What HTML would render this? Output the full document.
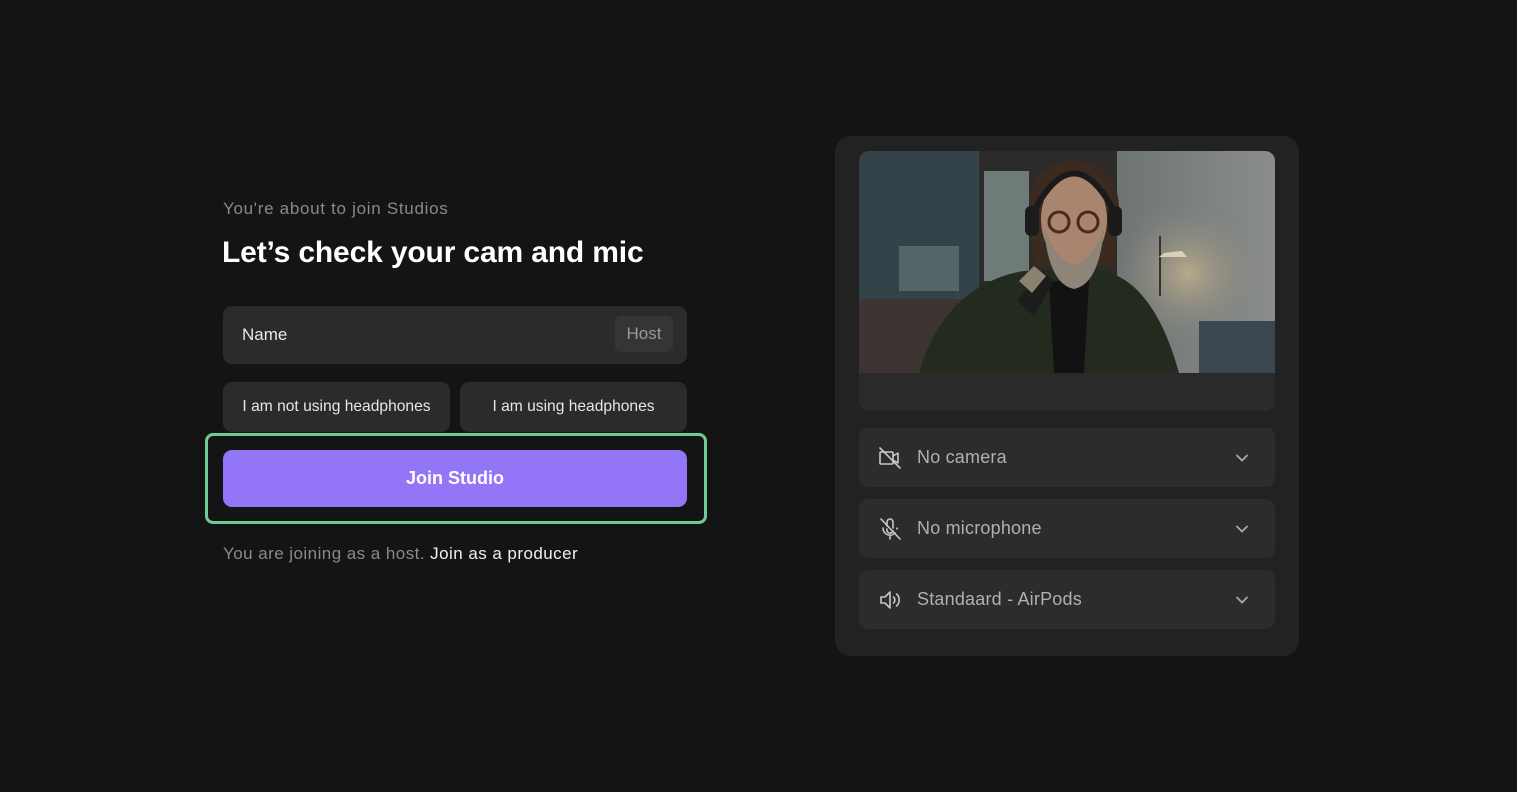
<!DOCTYPE html>
<html><head><meta charset="utf-8"><style>
*{box-sizing:border-box;margin:0;padding:0}
body{width:1517px;height:792px;background:#141414;font-family:"Liberation Sans",sans-serif;position:relative;overflow:hidden;color:#fff}
.abs{position:absolute}
.sub{left:223px;top:199px;font-size:17px;color:#8a8a8a;letter-spacing:.7px}
.h1{left:222px;top:236px;font-size:30px;font-weight:bold;letter-spacing:-.15px;color:#fff}
.name{left:223px;top:306px;width:464px;height:58px;background:#2b2b2b;border-radius:9px}
.name span{position:absolute;left:19px;top:19px;font-size:17px;color:#e8e8e8}
.host{position:absolute;right:14px;top:10px;width:58px;height:36px;background:#353535;border-radius:6px;color:#9a9a9a;font-size:17px;text-align:center;line-height:36px}
.hp{top:382px;height:50px;background:#2b2b2b;border-radius:9px;font-size:15.6px;color:#e6e6e6;text-align:center;line-height:50px}
.ring{left:205px;top:433px;width:502px;height:91px;border:3px solid #6fcb96;border-radius:8px}
.join{left:223px;top:450px;width:464px;height:57px;background:#9376f8;border-radius:9px;text-align:center;line-height:57px;font-size:18px;font-weight:bold;color:#fff}
.foot{left:223px;top:544px;font-size:17px;color:#8a8a8a;letter-spacing:.45px}
.foot b{color:#f0f0f0;font-weight:normal}
.panel{left:835px;top:136px;width:464px;height:520px;background:#222;border-radius:16px}
.vbox{left:859px;top:151px;width:416px;height:260px;background:#2a2a2a;border-radius:10px;overflow:hidden}
.sel{left:859px;width:416px;height:59px;background:#2c2c2c;border-radius:9px}
.sel span{position:absolute;left:58px;top:19px;font-size:18px;color:#b0b0b0;letter-spacing:.2px}
.sel svg.ic{position:absolute;left:19px;top:18px}
.sel svg.ch{position:absolute;right:26px;top:23px}
</style></head><body>
<div class="abs sub">You're about to join Studios</div>
<div class="abs h1">Let’s check your cam and mic</div>
<div class="abs name"><span>Name</span><div class="host">Host</div></div>
<div class="abs hp" style="left:223px;width:227px">I am not using headphones</div>
<div class="abs hp" style="left:460px;width:227px">I am using headphones</div>
<div class="abs ring"></div>
<div class="abs join">Join Studio</div>
<div class="abs foot">You are joining as a host. <b>Join as a producer</b></div>

<div class="abs panel"></div>
<div class="abs vbox">
<svg width="416" height="222" viewBox="0 0 416 222">
<defs>
<linearGradient id="wall" x1="0" x2="1"><stop offset="0" stop-color="#6e7474"/><stop offset="1" stop-color="#8a8d8a"/></linearGradient>
<radialGradient id="lamp" cx="0.45" cy="0.55" r="0.5"><stop offset="0" stop-color="#b8a98a"/><stop offset="1" stop-color="#7d807c" stop-opacity="0"/></radialGradient>
</defs>
<rect width="416" height="222" fill="#2c2b2a"/>
<rect x="0" y="0" width="120" height="150" fill="#34434a"/>
<rect x="125" y="20" width="45" height="110" fill="#6f7b78"/>
<rect x="40" y="95" width="60" height="45" fill="#56656a"/>
<rect x="0" y="148" width="170" height="74" fill="#3b3431"/>
<rect x="258" y="0" width="158" height="222" fill="url(#wall)"/>
<rect x="258" y="40" width="158" height="150" fill="url(#lamp)"/>
<rect x="300" y="85" width="2" height="60" fill="#333"/>
<path d="M305 102 l18 -2 l5 6 h-28z" fill="#d8d0b8"/>
<rect x="340" y="170" width="76" height="52" fill="#3c4650"/>
<path d="M60 222 C80 150 130 125 165 120 L235 118 C270 122 300 150 320 222Z" fill="#232a1e"/>
<path d="M190 130 h40 l-5 92 h-30z" fill="#121212"/>
<path d="M170 60 q0 -50 45 -50 q45 0 45 50 l-5 55 h-80z" fill="#3a2a20"/>
<ellipse cx="215" cy="68" rx="33" ry="46" fill="#a98570"/>
<path d="M185 78 q30 70 60 0 q-5 55 -30 60 q-25 -5 -30 -60z" fill="#8e8478"/>
<path d="M175 60 q40 -75 80 0" stroke="#1a1a1a" stroke-width="6" fill="none"/>
<rect x="166" y="55" width="14" height="30" rx="6" fill="#1b1b1b"/>
<rect x="249" y="55" width="14" height="30" rx="6" fill="#1b1b1b"/>
<circle cx="200" cy="71" r="10" stroke="#4a2a1a" stroke-width="3" fill="none"/>
<circle cx="229" cy="71" r="10" stroke="#4a2a1a" stroke-width="3" fill="none"/>
<path d="M158 150 l25 -30 l12 10 l-20 35z" fill="#1c1c1c"/>
<path d="M160 130 l15 -15 l12 10 l-14 17z" fill="#8c8270"/>
</svg>
</div>
<div class="abs sel" style="top:428px">
<svg class="ic" width="24" height="24" viewBox="0 0 24 24" fill="none" stroke="#c8c8c8" stroke-width="1.6" stroke-linecap="round" stroke-linejoin="round"><path d="M3 6h11a1 1 0 0 1 1 1v10a1 1 0 0 1-1 1H3a1 1 0 0 1-1-1V7a1 1 0 0 1 1-1z"/><path d="M15 10l5-3v10l-5-3"/><path d="M2 2l20 20"/></svg>
<span>No camera</span>
<svg class="ch" width="14" height="14" viewBox="0 0 14 14" fill="none" stroke="#aaa" stroke-width="1.8" stroke-linecap="round"><path d="M2 4.5l5 5 5-5"/></svg></div>
<div class="abs sel" style="top:499px">
<svg class="ic" width="24" height="24" viewBox="0 0 24 24" fill="none" stroke="#c8c8c8" stroke-width="1.6" stroke-linecap="round" stroke-linejoin="round"><path d="M9 9V5a3 3 0 0 1 6 0v6"/><path d="M15 14a3 3 0 0 1-6-2"/><path d="M5 11a7 7 0 0 0 12 5M19 11v1"/><path d="M12 19v3"/><path d="M3 2l19 20"/></svg>
<span>No microphone</span>
<svg class="ch" width="14" height="14" viewBox="0 0 14 14" fill="none" stroke="#aaa" stroke-width="1.8" stroke-linecap="round"><path d="M2 4.5l5 5 5-5"/></svg></div>
<div class="abs sel" style="top:570px">
<svg class="ic" width="24" height="24" viewBox="0 0 24 24" fill="none" stroke="#c8c8c8" stroke-width="1.6" stroke-linecap="round" stroke-linejoin="round"><path d="M3 9h4l5-5v16l-5-5H3z"/><path d="M15.5 9a4 4 0 0 1 0 6"/><path d="M18.5 6a8 8 0 0 1 0 12"/></svg>
<span>Standaard - AirPods</span>
<svg class="ch" width="14" height="14" viewBox="0 0 14 14" fill="none" stroke="#aaa" stroke-width="1.8" stroke-linecap="round"><path d="M2 4.5l5 5 5-5"/></svg></div>
</body></html>
